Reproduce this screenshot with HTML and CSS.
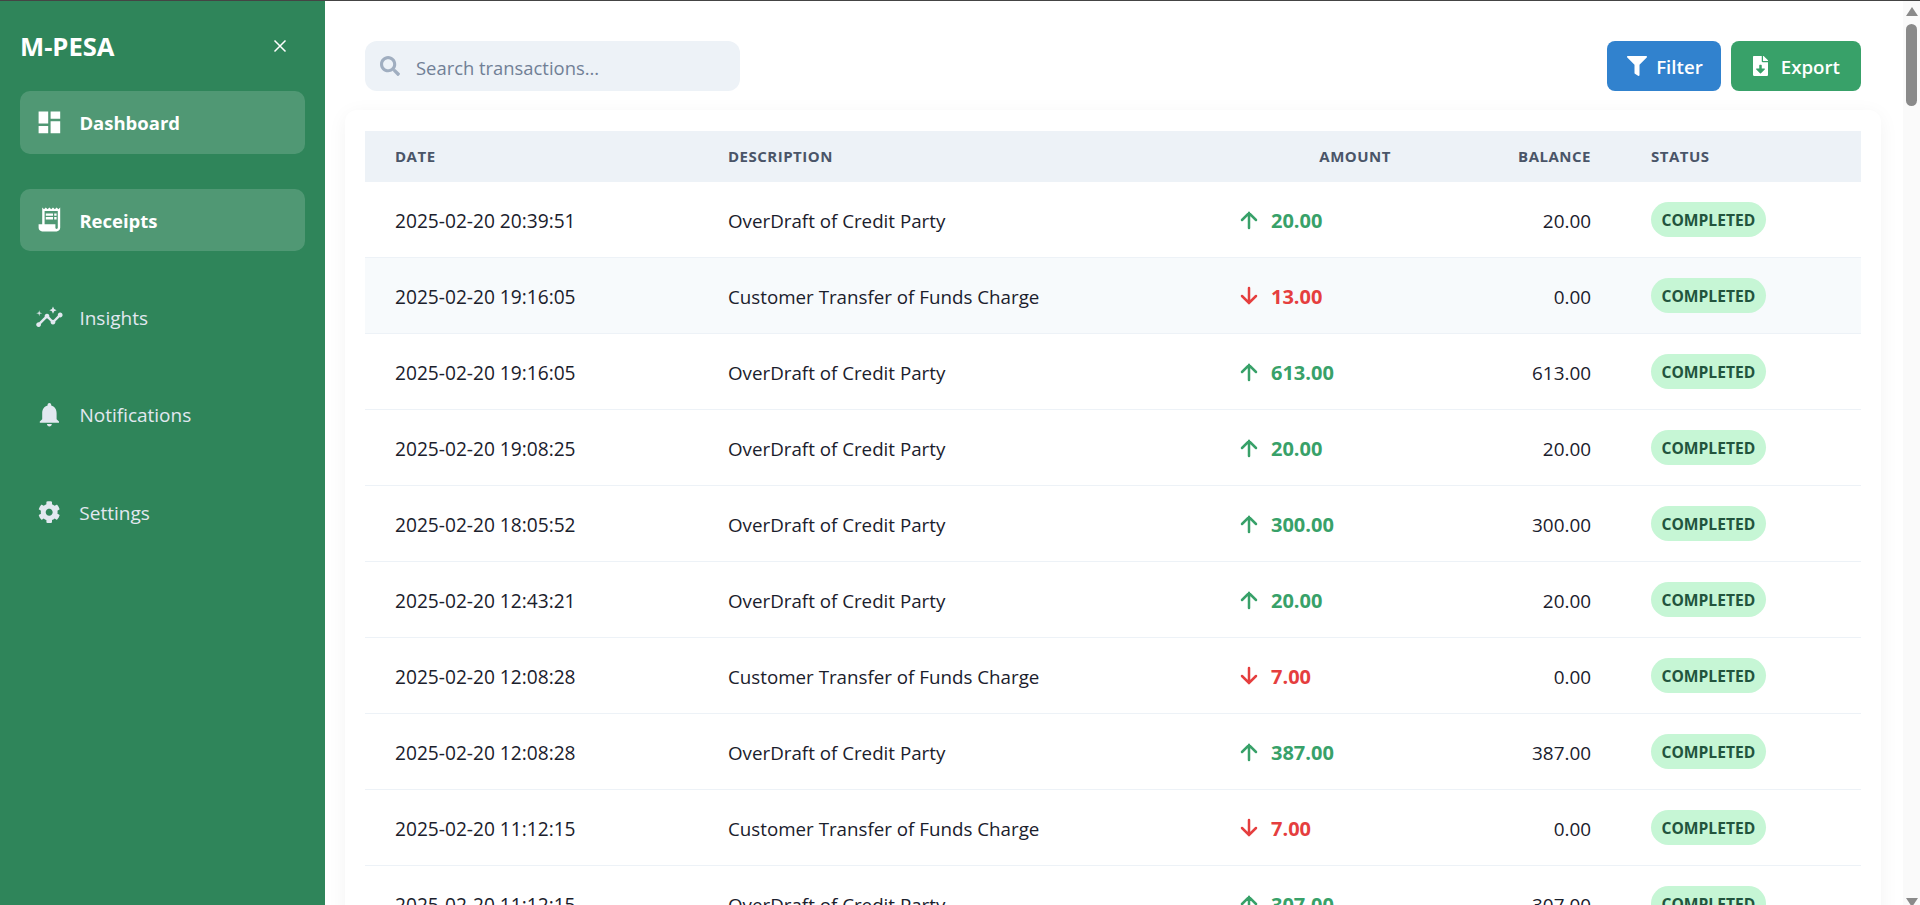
FILE: index.html
```html
<!DOCTYPE html>
<html lang="en">
<head>
<meta charset="utf-8">
<title>M-PESA Receipts</title>
<link rel="stylesheet" href="styles.css">
</head>
<body>
<div class="app">
  <aside class="sidebar">
    <div class="brand">
      <h1 class="logo">M-PESA</h1>
      <svg class="close" viewBox="0 0 14 14"><path d="M1.5 1.5l11 11M12.5 1.5l-11 11"/></svg>
    </div>
    <nav class="nav">
      <a class="nav-item active"><svg class="nav-icon" viewBox="0 0 24 24"><path d="M3 13h8V3H3v10zm0 8h8v-6H3v6zm10 0h8V11h-8v10zm0-18v6h8V3h-8z"/></svg><span>Dashboard</span></a>
      <a class="nav-item active"><svg class="nav-icon" viewBox="0 0 24 24"><path d="M19.5 3.5 18 2l-1.5 1.5L15 2l-1.5 1.5L12 2l-1.5 1.5L9 2 7.5 3.5 6 2v14H3v3c0 1.66 1.34 3 3 3h12c1.66 0 3-1.34 3-3V2l-1.5 1.5zM19 19c0 .55-.45 1-1 1s-1-.45-1-1v-3H8V5h11v14z"/><path d="M9 7h6v2H9zm7 0h2v2h-2zm-7 3h6v2H9zm7 0h2v2h-2z"/></svg><span>Receipts</span></a>
      <a class="nav-item"><svg class="nav-icon" viewBox="0 0 24 24"><path d="M21 8c-1.45 0-2.26 1.44-1.93 2.51l-3.55 3.56c-.3-.09-.74-.09-1.04 0l-2.55-2.55C12.27 10.45 11.46 9 10 9c-1.45 0-2.27 1.44-1.93 2.52l-4.56 4.55C2.44 15.74 1 16.55 1 18c0 1.1.9 2 2 2 1.45 0 2.26-1.44 1.93-2.51l4.55-4.56c.3.09.74.09 1.04 0l2.55 2.55C12.73 16.55 13.54 18 15 18c1.45 0 2.27-1.44 1.93-2.52l3.56-3.55c1.07.33 2.51-.48 2.51-1.93 0-1.1-.9-2-2-2z"/><path d="m15 9 .94-2.07L18 6l-2.06-.93L15 3l-.92 2.07L12 6l2.08.93zM3.5 11 4 9l2-.5L4 8l-.5-2L3 8l-2 .5L3 9z"/></svg><span>Insights</span></a>
      <a class="nav-item"><svg class="nav-icon" viewBox="0 0 24 24"><path d="M12 22c1.1 0 2-.9 2-2h-4c0 1.1.89 2 2 2zm6-6v-5c0-3.07-1.64-5.64-4.5-6.32V4c0-.83-.67-1.5-1.5-1.5s-1.5.67-1.5 1.5v.68C7.63 5.36 6 7.92 6 11v5l-2 2v1h16v-1l-2-2z"/></svg><span>Notifications</span></a>
      <a class="nav-item"><svg class="nav-icon cog" viewBox="0 0 512 512"><path d="M487.4 315.7l-42.6-24.6c4.3-23.2 4.3-47 0-70.2l42.6-24.6c4.9-2.8 7.1-8.6 5.5-14-11.1-35.6-30-67.8-54.7-94.6-3.8-4.1-10-5.1-14.8-2.3L380.8 110c-17.9-15.4-38.5-27.3-60.8-35.1V25.8c0-5.6-3.9-10.5-9.4-11.7-36.7-8.2-74.3-7.8-109.2 0-5.5 1.2-9.4 6.1-9.4 11.7V75c-22.2 7.9-42.8 19.8-60.8 35.1L88.7 85.5c-4.9-2.8-11-1.9-14.8 2.3-24.7 26.7-43.6 58.9-54.7 94.6-1.7 5.4.6 11.2 5.5 14L67.3 221c-4.3 23.2-4.3 47 0 70.2l-42.6 24.6c-4.9 2.8-7.1 8.6-5.5 14 11.1 35.6 30 67.8 54.7 94.6 3.8 4.1 10 5.1 14.8 2.3l42.6-24.6c17.9 15.4 38.5 27.3 60.8 35.1v49.2c0 5.6 3.9 10.5 9.4 11.7 36.7 8.2 74.3 7.8 109.2 0 5.5-1.2 9.4-6.1 9.4-11.7v-49.2c22.2-7.9 42.8-19.8 60.8-35.1l42.6 24.6c4.9 2.8 11 1.9 14.8-2.3 24.7-26.7 43.6-58.9 54.7-94.6 1.5-5.5-.7-11.3-5.6-14.1zM256 336c-44.1 0-80-35.9-80-80s35.9-80 80-80 80 35.9 80 80-35.9 80-80 80z"/></svg><span>Settings</span></a>
    </nav>
  </aside>
  <main class="main">
    <div class="content">
      <div class="toolbar">
        <label class="search">
          <svg class="search-icon" viewBox="0 0 512 512"><path d="M505 442.7L405.3 343c-4.5-4.5-10.6-7-17-7H372c27.6-35.3 44-79.7 44-128C416 93.1 322.9 0 208 0S0 93.1 0 208s93.1 208 208 208c48.3 0 92.7-16.4 128-44v16.3c0 6.4 2.5 12.5 7 17l99.7 99.7c9.4 9.4 24.6 9.4 33.9 0l28.3-28.3c9.4-9.4 9.4-24.6.1-34zM208 336c-70.7 0-128-57.2-128-128 0-70.7 57.2-128 128-128 70.7 0 128 57.2 128 128 0 70.7-57.2 128-128 128z"/></svg>
          <input class="search-input" type="text" placeholder="Search transactions...">
        </label>
        <div class="actions">
          <button class="btn btn-filter"><svg class="btn-icon" viewBox="0 0 512 512"><path d="M487.976 0H24.028C2.71 0-8.047 25.866 7.058 40.971L192 225.941V432c0 7.831 3.821 15.17 10.237 19.662l80 55.98C298.02 518.69 320 507.493 320 487.98V225.941l184.947-184.97C520.021 25.896 509.338 0 487.976 0z"/></svg>Filter</button>
          <button class="btn btn-export"><svg class="btn-icon" viewBox="0 0 384 512"><path d="M224 136V0H24C10.7 0 0 10.7 0 24v464c0 13.3 10.7 24 24 24h336c13.3 0 24-10.7 24-24V160H248c-13.2 0-24-10.8-24-24zm76.45 211.36l-96.42 95.7c-6.65 6.61-17.39 6.61-24.04 0l-96.42-95.7C73.42 337.29 80.54 320 94.82 320H160v-80c0-8.84 7.16-16 16-16h32c8.84 0 16 7.16 16 16v80h65.18c14.28 0 21.4 17.29 11.27 27.36zM377 105L279.1 7c-4.5-4.5-10.6-7-17-7H256v128h128v-6.1c0-6.3-2.5-12.4-7-16.9z"/></svg>Export</button>
        </div>
      </div>
      <section class="card">
        <table class="table">
          <thead>
            <tr><th class="col-date">Date</th><th class="col-desc">Description</th><th class="col-amount">Amount</th><th class="col-balance">Balance</th><th class="col-status">Status</th></tr>
          </thead>
          <tbody>
            <tr><td class="date">2025-02-20 20:39:51</td><td class="desc">OverDraft of Credit Party</td><td><div class="amount up"><svg class="arrow" viewBox="0 0 24 24"><path d="M12 20V5M5 12l7-7 7 7"/></svg>20.00</div></td><td class="bal">20.00</td><td><span class="pill">COMPLETED</span></td></tr>
            <tr class="hover"><td class="date">2025-02-20 19:16:05</td><td class="desc">Customer Transfer of Funds Charge</td><td><div class="amount down"><svg class="arrow" viewBox="0 0 24 24"><path d="M12 4v15M5 12l7 7 7-7"/></svg>13.00</div></td><td class="bal">0.00</td><td><span class="pill">COMPLETED</span></td></tr>
            <tr><td class="date">2025-02-20 19:16:05</td><td class="desc">OverDraft of Credit Party</td><td><div class="amount up"><svg class="arrow" viewBox="0 0 24 24"><path d="M12 20V5M5 12l7-7 7 7"/></svg>613.00</div></td><td class="bal">613.00</td><td><span class="pill">COMPLETED</span></td></tr>
            <tr><td class="date">2025-02-20 19:08:25</td><td class="desc">OverDraft of Credit Party</td><td><div class="amount up"><svg class="arrow" viewBox="0 0 24 24"><path d="M12 20V5M5 12l7-7 7 7"/></svg>20.00</div></td><td class="bal">20.00</td><td><span class="pill">COMPLETED</span></td></tr>
            <tr><td class="date">2025-02-20 18:05:52</td><td class="desc">OverDraft of Credit Party</td><td><div class="amount up"><svg class="arrow" viewBox="0 0 24 24"><path d="M12 20V5M5 12l7-7 7 7"/></svg>300.00</div></td><td class="bal">300.00</td><td><span class="pill">COMPLETED</span></td></tr>
            <tr><td class="date">2025-02-20 12:43:21</td><td class="desc">OverDraft of Credit Party</td><td><div class="amount up"><svg class="arrow" viewBox="0 0 24 24"><path d="M12 20V5M5 12l7-7 7 7"/></svg>20.00</div></td><td class="bal">20.00</td><td><span class="pill">COMPLETED</span></td></tr>
            <tr><td class="date">2025-02-20 12:08:28</td><td class="desc">Customer Transfer of Funds Charge</td><td><div class="amount down"><svg class="arrow" viewBox="0 0 24 24"><path d="M12 4v15M5 12l7 7 7-7"/></svg>7.00</div></td><td class="bal">0.00</td><td><span class="pill">COMPLETED</span></td></tr>
            <tr><td class="date">2025-02-20 12:08:28</td><td class="desc">OverDraft of Credit Party</td><td><div class="amount up"><svg class="arrow" viewBox="0 0 24 24"><path d="M12 20V5M5 12l7-7 7 7"/></svg>387.00</div></td><td class="bal">387.00</td><td><span class="pill">COMPLETED</span></td></tr>
            <tr><td class="date">2025-02-20 11:12:15</td><td class="desc">Customer Transfer of Funds Charge</td><td><div class="amount down"><svg class="arrow" viewBox="0 0 24 24"><path d="M12 4v15M5 12l7 7 7-7"/></svg>7.00</div></td><td class="bal">0.00</td><td><span class="pill">COMPLETED</span></td></tr>
            <tr><td class="date">2025-02-20 11:12:15</td><td class="desc">OverDraft of Credit Party</td><td><div class="amount up"><svg class="arrow" viewBox="0 0 24 24"><path d="M12 20V5M5 12l7-7 7 7"/></svg>307.00</div></td><td class="bal">307.00</td><td><span class="pill">COMPLETED</span></td></tr>
          </tbody>
        </table>
      </section>
    </div>
    <div class="scrollbar">
      <span class="scroll-arrow scroll-up"></span>
      <span class="scroll-thumb"></span>
      <span class="scroll-arrow scroll-down"></span>
    </div>
  </main>
</div>
</body>
</html>
```
FILE: styles.css
```css
* { box-sizing: border-box; }
html, body { margin: 0; height: 100%; overflow: hidden; }
body { font-family: "Open Sans", "Noto Sans", sans-serif; color: #1a202c; background: #fff; }

.app { display: flex; height: 100vh; border-top: 1px solid #444; }

.sidebar { flex: 0 0 325px; background: #2f855a; padding: 20px; color: #fff; }
.brand { display: flex; align-items: center; justify-content: space-between; height: 50px; margin-bottom: 20px; padding-right: 18px; }
.logo { margin: 0; font-size: 25.6px; font-weight: 700; color: #fff; }
.close { width: 14px; height: 14px; fill: none; stroke: #fff; stroke-width: 1.5; }

.nav { display: flex; flex-direction: column; gap: 35px; }
.nav-item { display: flex; align-items: center; gap: 16px; height: 62.5px; padding-left: 14.6px; border-radius: 10px; font-size: 19px; color: #e2e8f0; }
.nav-item span { padding-top: 1px; }
.nav-item.active { background: rgba(255, 255, 255, 0.16); color: #fff; font-size: 18.5px; font-weight: 700; }
.nav-icon { flex: 0 0 28.8px; width: 28.8px; height: 28.8px; fill: currentColor; }
.nav-icon.cog { flex-basis: 22.4px; width: 22.4px; height: 22.4px; margin: 0 3.2px; }

.main { flex: 1; min-width: 0; display: flex; height: 100%; overflow: hidden; }
.content { flex: 1; min-width: 0; padding: 40px 22px 0 20px; }

.scrollbar { flex: 0 0 17px; display: flex; flex-direction: column; align-items: center; padding-top: 6px; background: #fafafa; }
.scroll-arrow { flex: none; width: 0; height: 0; border-left: 6.5px solid transparent; border-right: 6.5px solid transparent; }
.scroll-up { border-bottom: 9px solid #8a8a8a; }
.scroll-down { margin-top: auto; margin-bottom: -2px; border-top: 9px solid #8a8a8a; }
.scroll-thumb { flex: none; width: 11px; height: 82px; margin-top: 8px; border-radius: 5.5px; background: #8a8a8a; }

.toolbar { display: flex; align-items: center; justify-content: space-between; margin: 0 20px 19px; }
.search { display: flex; align-items: center; gap: 16px; width: 375px; height: 50px; padding-left: 15px; background: #edf2f7; border-radius: 12px; }
.search-icon { flex: none; width: 20px; height: 20px; fill: #a0aec0; }
.search-input { flex: 1; min-width: 0; padding: 2px 0 0; border: 0; background: transparent; outline: 0; font: inherit; font-size: 18.4px; color: #1a202c; }
.search-input::placeholder { color: #718096; opacity: 1; }

.actions { display: flex; gap: 10px; }
.btn { display: flex; align-items: center; height: 50px; border: 0; border-radius: 8px; font: inherit; font-size: 18.7px; font-weight: 600; color: #fff; }
.btn-icon { height: 20px; width: auto; fill: #fff; }
.btn-filter { gap: 9px; padding: 0 18px 0 20px; background: #3182ce; }
.btn-export { gap: 13px; padding: 0 21px 0 22px; background: #38a169; }

.card { padding: 21px 20px; background: #fff; border-radius: 12px; box-shadow: 0 4px 20px rgba(0, 0, 0, 0.05); }
.table { width: 100%; border-collapse: separate; border-spacing: 0; table-layout: fixed; }
th { height: 51px; padding: 0 30px 2px; background: #edf2f7; color: #4a5568; font-size: 15px; font-weight: 700; letter-spacing: 0.5px; text-transform: uppercase; text-align: left; }
td { height: 76px; padding: 0 30px; border-bottom: 1px solid #edf2f7; font-size: 18.9px; }
tr.hover td { background: #f7fafc; }
.col-date { width: 333px; }
.col-desc { width: 513px; }
.col-amount { width: 210px; text-align: right; }
.col-balance { width: 200px; text-align: right; }
.col-status { width: 240px; }
td.date { padding-top: 2px; font-size: 19.15px; }
td.desc { padding-top: 2px; font-size: 18.75px; }
td.bal { padding-top: 2px; text-align: right; }
.amount { display: flex; align-items: center; gap: 10px; padding-top: 1px; font-size: 20px; font-weight: 700; }
.amount.up { color: #38a169; }
.amount.down { color: #e53e3e; }
.arrow { flex: none; width: 24px; height: 24px; margin: -1px 0 0 -4px; fill: none; stroke: currentColor; stroke-width: 2.5; stroke-linecap: round; }
.pill { display: inline-block; padding: 0 10.5px; height: 35px; line-height: 37px; border-radius: 18px; background: #c6f6d5; color: #22543d; font-size: 15.6px; font-weight: 700; }
```
